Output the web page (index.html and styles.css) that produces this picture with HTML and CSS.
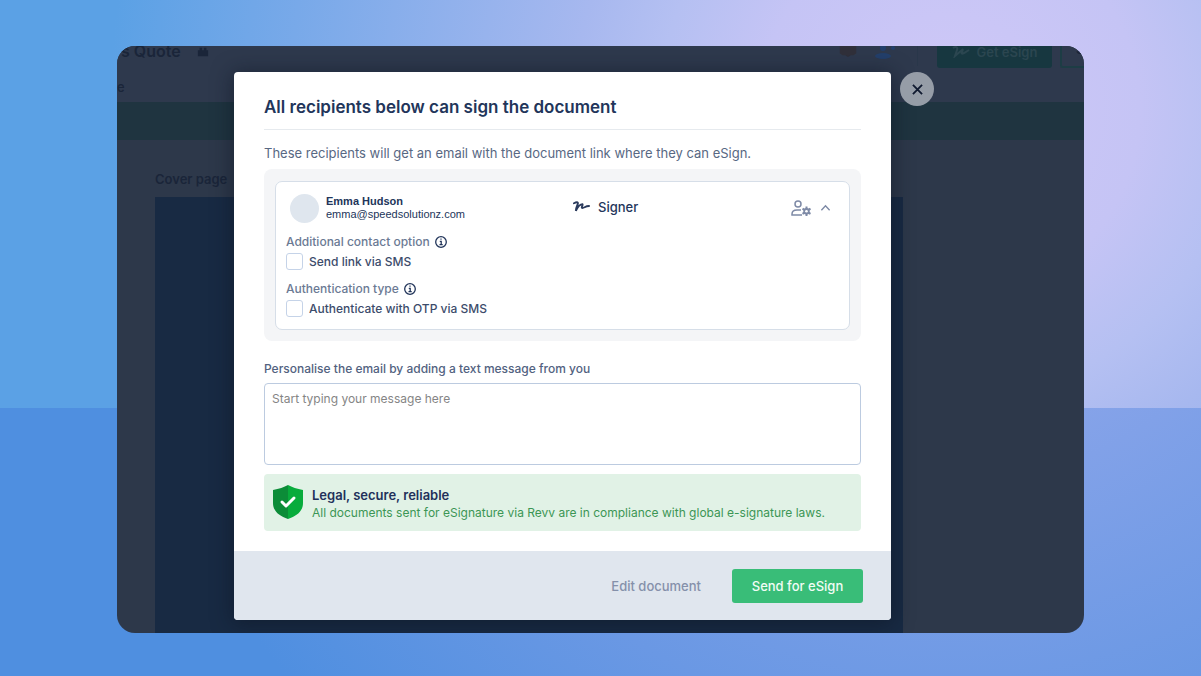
FILE: index.html
```html
<!DOCTYPE html>
<html lang="en">
<head>
<meta charset="utf-8">
<meta name="viewport" content="width=device-width, initial-scale=1">
<title>Send for eSign</title>
<link rel="stylesheet" href="styles.css">
</head>
<body class="backdrop">
<main class="frame">
  <div class="app" aria-hidden="true">
    <div class="app-bar">
      <span class="doc-name">s Quote</span>
      <svg class="lock" viewBox="0 0 14 14"><path d="M1 5h2V2h3v3h2V2h3v3h2v7H1z"/></svg>
      <div class="app-tools">
        <svg class="bot" viewBox="0 0 18 12"><path fill="#30303a" d="M0 0h18v8l-3 2h-3l-3 2-3-2H3L0 8z"/></svg>
        <svg class="people" viewBox="0 0 20 14"><circle cx="8" cy="2" r="3"/><ellipse cx="8" cy="10" rx="8" ry="3"/><circle cx="18" cy="2" r="2"/></svg>
        <span class="tool-rule"></span>
        <span class="get-esign"><svg viewBox="0 0 18 12"><path d="M1 2c3-2 5-1 4 2L3 10l7-6c1-1 1 0 0 2s0 2 2 1l5-3"/></svg>Get eSign</span>
        <span class="ghost-button">S</span>
      </div>
    </div>
    <div class="app-menu">e</div>
    <div class="app-band"></div>
    <div class="app-page">
      <span>Cover page</span>
      <div class="cover"></div>
    </div>
  </div>

  <div class="layer">
    <section class="dialog" role="dialog" aria-labelledby="dialog-title">
      <div class="dialog-body">
        <h1 class="title" id="dialog-title">All recipients below can sign the document</h1>
        <p class="intro">These recipients will get an email with the document link where they can eSign.</p>
        <div class="recipients">
          <article class="card">
            <header class="person">
              <span class="avatar"></span>
              <div class="identity"><strong>Emma Hudson</strong><span>emma@speedsolutionz.com</span></div>
              <div class="role">
                <svg class="scribble" viewBox="0 0 18 12"><path d="M1 2c2-1 5-2 4 1S3 7 3 10c2-4 5-7 7-7 1 1-2 4 0 4 2 0 3-2 7-2"/></svg>
                Signer
              </div>
              <button class="icon-button" type="button" aria-label="Recipient settings">
                <svg class="user-gear" viewBox="0 0 20 16"><circle class="line" cx="7" cy="4" r="3"/><path class="line" d="M11 15H1v-1c0-3 2-4 5-4h4"/><path class="gear" d="M14.500 6.500h2v1.500l1 .5 1.500-.7 1 1.800-1.300 1v1.300l1.300 1-1 1.800-1.500-.7-1 .5V16h-2v-1.500l-1-.5-1.500.7-1-1.800 1.300-1v-1.300l-1.300-1 1-1.800 1.500.7 1-.5z"/><circle cx="15.500" cy="11.300" r="1.300" fill="#fff"/></svg>
              </button>
              <button class="icon-button" type="button" aria-label="Collapse recipient">
                <svg class="chevron" viewBox="0 0 12 8"><path d="M1.500 6.500 6 1.500l4.500 5"/></svg>
              </button>
            </header>
            <fieldset class="option">
              <legend>Additional contact option
                <svg class="info" viewBox="0 0 12 12"><circle cx="6" cy="6" r="5.300"/><path d="M4.800 5.300h1.400v3.200M4.500 8.600h3.200M5.400 3.200h1.200"/></svg>
              </legend>
              <label class="check"><input type="checkbox">Send link via SMS</label>
            </fieldset>
            <fieldset class="option">
              <legend>Authentication type
                <svg class="info" viewBox="0 0 12 12"><circle cx="6" cy="6" r="5.300"/><path d="M4.800 5.300h1.400v3.200M4.500 8.600h3.200M5.400 3.200h1.200"/></svg>
              </legend>
              <label class="check"><input type="checkbox">Authenticate with OTP via SMS</label>
            </fieldset>
          </article>
        </div>
        <label class="message-label" for="message">Personalise the email by adding a text message from you</label>
        <textarea class="message" id="message" placeholder="Start typing your message here"></textarea>
        <aside class="legal">
          <svg class="shield" viewBox="0 0 30 34"><path fill="#0c8c38" d="M15 0C11 2 6 4 0 5v13c0 8 6 13 15 16z"/><path fill="#08ac3c" d="M15 0c4 2 9 4 15 5v13c0 8-6 13-15 16z"/><path d="m9 17 4 4 8-8" fill="none" stroke="#fff" stroke-width="3" stroke-linecap="round" stroke-linejoin="round"/></svg>
          <div><strong>Legal, secure, reliable</strong><p>All documents sent for eSignature via Revv are in compliance with global e-signature laws.</p></div>
        </aside>
      </div>
      <footer class="actions">
        <button class="edit" type="button">Edit document</button>
        <button class="send" type="button">Send for eSign</button>
      </footer>
    </section>
    <button class="close" type="button" aria-label="Close"><svg viewBox="0 0 12 12"><path d="m1 1 10 10M11 1 1 11"/></svg></button>
  </div>
</main>
</body>
</html>
```
FILE: styles.css
```css
* { box-sizing: border-box; }

.backdrop {
  margin: 0;
  min-height: 100vh;
  padding: 46px 117px 43px;
  display: grid;
  font-family: Inter, "Liberation Sans", sans-serif;
  color: #22355a;
  background:
    radial-gradient(circle at 950px -278px, #86a3e9 300px, #6a98e4 600px, #4f8fe0 860px) left bottom / 100% 268px no-repeat,
    radial-gradient(circle at 950px 110px, #cfc8f7 0, #c5c4f5 190px, #b5c0f2 290px, #a7b8ef 375px, #78a9e9 660px, #5ba1e5 840px);
}

button, textarea { font: inherit; }
button { border: 0; padding: 0; background: none; cursor: pointer; }
p, h1 { margin: 0; }
svg { display: block; flex: none; }

.frame {
  display: grid;
  overflow: hidden;
  border-radius: 18px;
  background: #2d384a;
}
.app, .layer { grid-area: 1 / 1; min-width: 0; }

/* Dimmed editor behind the dialog */
.app { display: flex; flex-direction: column; color: #1a2539; font-weight: 600; }
.app-bar { display: flex; align-items: flex-start; height: 32px; overflow: hidden; background: #2e394d; }
.doc-name { font-size: 16px; line-height: 10px; padding-left: 4px; }
.lock { width: 14px; height: 12px; margin-left: 15px; fill: #1a2539; }
.app-tools { display: flex; align-items: flex-start; margin-left: auto; }
.bot { width: 18px; height: 11px; }
.people { width: 20px; height: 14px; margin-left: 18px; fill: #233f6b; }
.tool-rule { width: 1px; height: 20px; margin-left: 22px; background: #29374a; }
.get-esign {
  display: flex; align-items: center; justify-content: center; gap: 7px;
  width: 115px; height: 22px; margin-left: 19px; padding-bottom: 11px;
  border-radius: 0 0 3px 3px;
  background: #173740; color: #2b4650; font-size: 13px;
}
.get-esign svg { width: 18px; height: 12px; fill: none; stroke: #2b4650; stroke-width: 2; }
.ghost-button { width: 24px; height: 22px; margin-left: 8px; padding-left: 14px; border: solid #1d3d45; border-width: 0 0 2px 2px; border-radius: 0 0 0 3px; font-size: 12px; line-height: 8px; overflow: hidden; }
.app-menu { height: 24px; font-size: 13px; line-height: 19px; font-weight: 500; background: #2e394d; }
.app-band { height: 38px; background: #1f3440; }
.app-page { flex: 1; display: flex; flex-direction: column; width: 786px; padding: 29px 0 0 38px; font-size: 13px; line-height: 20px; }
.cover { flex: 1; margin-top: 8px; background: #182a43; }

/* Dialog */
.layer { display: flex; align-items: flex-start; gap: 9px; padding: 26px 24px 13px 117px; }
.dialog {
  flex: 0 1 657px;
  border-radius: 4px;
  background: #fff;
  box-shadow: 0 2px 20px 2px rgba(12, 20, 34, .5);
}
.dialog-body { display: flex; flex-direction: column; padding: 22px 30px 20px; }
.title { padding-bottom: 9px; border-bottom: 1px solid #e6eaee; font-size: 17px; line-height: 26px; font-weight: 600; }
.intro { margin-top: 13px; color: #586883; font-size: 13px; line-height: 20px; }
.recipients { margin-top: 6px; padding: 12px 11px 11px; border-radius: 8px; background: #f4f5f7; }
.card { padding: 11px 10px 10px; border: 1px solid #d6dee8; border-radius: 7px; background: #fff; }
.person { display: flex; align-items: center; height: 30px; padding: 0 8px 0 4px; }
.avatar { width: 29px; height: 29px; border-radius: 50%; background: #dfe6ee; }
.identity { display: flex; flex-direction: column; width: 240px; margin-left: 7px; font-family: "Liberation Sans", Arial, sans-serif; font-size: 11px; line-height: 13px; }
.role { display: flex; align-items: center; gap: 8px; margin: 0 auto 0 7px; font-size: 13px; line-height: 18px; padding-bottom: 2px; font-weight: 500; }
.scribble { width: 17px; height: 12px; fill: none; stroke: #2a3a5c; stroke-width: 2; stroke-linecap: round; }
.icon-button + .icon-button { margin-left: 9px; }
.user-gear { width: 20px; height: 16px; fill: #7e8aa6; }
.user-gear .line { fill: none; stroke: #7e8aa6; stroke-width: 1.5; }
.chevron { width: 11px; height: 8px; fill: none; stroke: #7e8aa6; stroke-width: 1.5; }
.option { min-width: 0; margin: 10px 0 0; padding: 0; border: 0; }
.option + .option { margin-top: 8px; }
.option legend { display: flex; align-items: center; gap: 5px; padding: 0; color: #6b7a94; font-size: 12px; line-height: 18px; font-weight: 500; }
.info { width: 12px; height: 12px; fill: none; stroke: #22355a; stroke-width: 1.3; }
.check { display: flex; align-items: center; gap: 6px; height: 21px; color: #3c4c6b; font-size: 12px; font-weight: 500; }
.check input { appearance: none; width: 17px; height: 17px; margin: 0; border: 1px solid #c5d3e8; border-radius: 3px; background: #fff; }
.message-label { margin-top: 18px; color: #52627f; font-size: 12px; line-height: 20px; font-weight: 500; }
.message { height: 82px; margin-top: 4px; padding: 6px 7px; border: 1px solid #bccbe0; border-radius: 4px; background: #fff; color: #22355a; font-size: 12px; line-height: 18px; resize: none; }
.message::placeholder { color: #858585; opacity: 1; }
.legal { display: flex; align-items: center; gap: 9px; margin-top: 9px; padding: 9px 9px 10px; border-radius: 4px; background: #e1f2e6; font-size: 12px; line-height: 17px; color: #3c9655; }
.legal div { padding-top: 3px; }
.legal strong { display: block; color: #22305a; font-size: 13px; line-height: 18px; font-weight: 600; }
.shield { width: 30px; height: 34px; }
.actions { display: flex; justify-content: flex-end; align-items: center; gap: 31px; padding: 18px 28px 17px; border-radius: 0 0 4px 4px; background: #e0e6ee; }
.edit { color: #8590aa; font-size: 13px; font-weight: 500; }
.send { width: 131px; height: 34px; border-radius: 3px; background: #39bd78; color: #f1fcf5; font-size: 13px; font-weight: 500; }
.close { display: grid; place-items: center; flex: none; width: 34px; height: 34px; border-radius: 50%; background: #969da7; }
.close svg { width: 11px; height: 11px; fill: none; stroke: #101a30; stroke-width: 2; }
```
